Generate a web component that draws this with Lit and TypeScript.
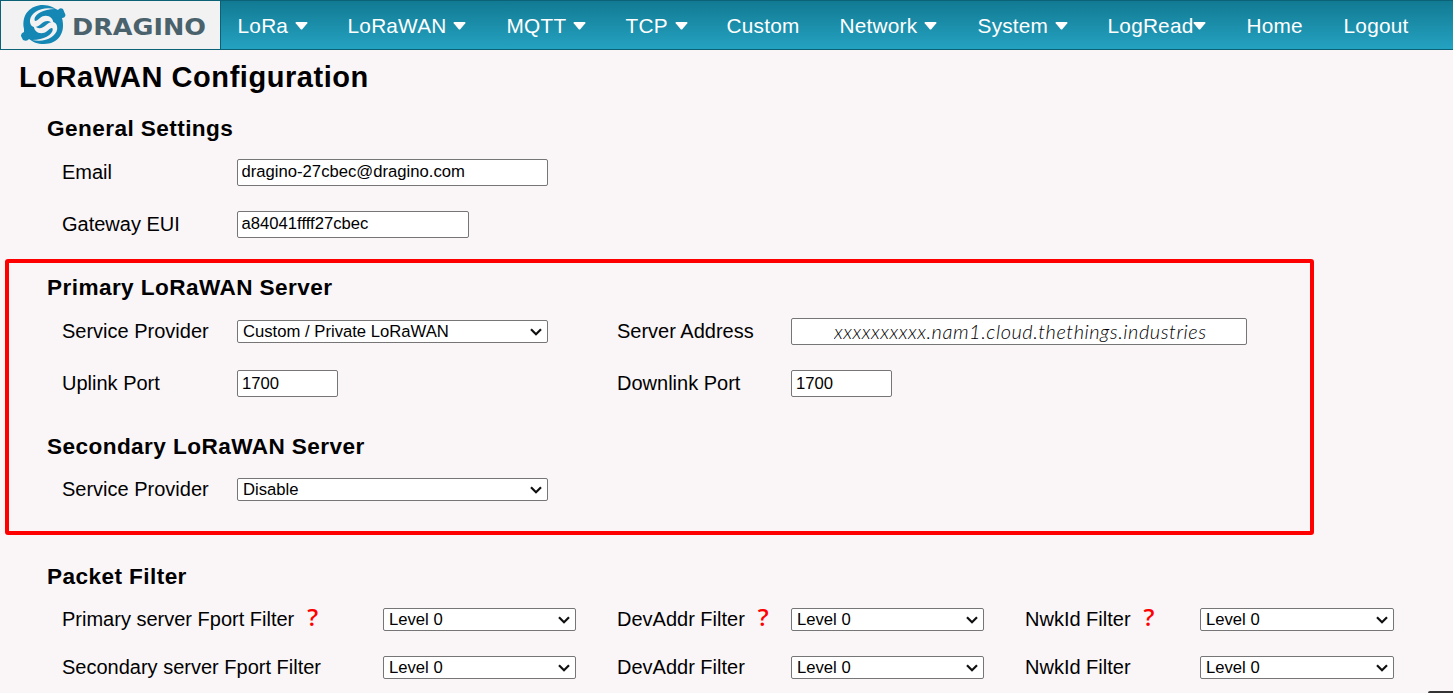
import { LitElement, html, css, nothing } from "lit";
import { customElement, property } from "lit/decorators.js";

const caret = html`<svg class="caret" width="13" height="8" viewBox="0 0 13 8"><path d="M1.2 0H11.8Q13 .2 12.3 1.2L7.3 7.2Q6.5 8 5.7 7.2L.7 1.2Q0 .2 1.2 0Z" fill="#fff"/></svg>`;

@customElement("select-box")
class SelectBox extends LitElement {
  @property() value = "";
  static styles = css`
    :host { display: flex; align-items: center; box-sizing: border-box; height: 23px; border: 1px solid #767676; border-radius: 2px; background: #fff; padding: 0 5px; font: 16.67px/21px "Liberation Sans", Arial, sans-serif; color: #000; justify-content: space-between; }
    svg { display: block; margin-top: 1px; }
  `;
  render() {
    return html`<span>${this.value}</span><svg width="12" height="8" viewBox="0 0 12 8"><path d="M1 1.2L6 6.2L11 1.2" fill="none" stroke="#101010" stroke-width="2.2"/></svg>`;
  }
}

@customElement("app-root")
class AppRoot extends LitElement {
  static styles = css`
    :host { display: block; height: 693px; overflow: hidden; position: relative; background: #faf6f8; color: #000; font: 20px/24px "Liberation Sans", Arial, sans-serif; }
    .nav { box-sizing: border-box; height: 50px; border: 1px solid #0b6176; border-right: 0; display: grid; grid-template-columns: 220px 110px 159px 119px 101px 113px 138px 130px 139px 97px 1fr; background: linear-gradient(#127a93, #24a2c1); }
    .brand { background: #f2f2f2; border-right: 1px solid #0b6176; }
    .brand svg { display: block; }
    .wordmark { font: bold 23.3px "DejaVu Sans", sans-serif; fill: #4a626b; }
    .item { display: flex; align-items: center; padding-left: 16.6px; color: #fff; font-size: 20.8px; letter-spacing: .2px; height: 48px; box-sizing: border-box; padding-top: 2px; white-space: pre; }
    .caret { margin-left: 7px; margin-top: 0; }
    .tight .caret { margin-left: 0; }
    h1 { margin: 10px 0 0 19px; font-size: 29px; line-height: 34px; letter-spacing: .55px; }
    h2 { margin: 0 0 0 47px; font-size: 22.6px; line-height: 28px; letter-spacing: .42px; }
    .row { display: grid; grid-template-columns: 175px 380px 174px 1fr; padding-left: 62px; align-items: center; }
    .row.filter { grid-template-columns: 321px 234px 174px 234px 175px 1fr; }
    input { box-sizing: border-box; height: 27px; margin: 2px 0 0; padding: 0 3.5px 1px; border: 1px solid #767676; border-radius: 2px; background: #fff; font: 16.67px "Liberation Sans", Arial, sans-serif; color: #000; outline: none; }
    .prov select-box { margin-top: 2px; }
    .w311 { width: 311px; } .w232 { width: 232px; } .w193 { width: 193px; } .w194 { width: 194px; }
    .w101 { width: 101px; padding: 0 4px; }
    .addr { width: 456px; padding: 0 0 2px 42px; font: italic 300 20px Lato, sans-serif; letter-spacing: .53px; }
    .q { color: #f00; font: 600 24px/0 "Open Sans", sans-serif; margin-left: 13px; }
    .general { margin-top: 21px; }
    .mail { margin-top: 14px; } .eui { margin-top: 23px; }
    .primary { margin-top: 36px; } .prov { margin-top: 14px; } .ports { margin-top: 23px; }
    .secondary { margin-top: 36px; } .prov2 { margin-top: 16px; }
    .packet { margin-top: 62px; } .f1 { margin-top: 16px; } .f2 { margin-top: 24px; }
    .frame { position: absolute; left: 5px; top: 259px; width: 1309px; height: 276px; box-sizing: border-box; border: 4px solid #f00; border-radius: 3px; pointer-events: none; }
    .corner { position: absolute; right: 0; bottom: 0; width: 25px; height: 2px; background: #333; border-top-left-radius: 3px; }
  `;
  item(label: string, arrow: boolean, tight = false) {
    return html`<div class="item ${tight ? "tight" : ""}">${label}${arrow ? caret : nothing}</div>`;
  }
  render() {
    return html`
      <nav class="nav">
        <div class="brand"><svg width="219" height="48" viewBox="1 1 219 48">
          <path fill="#1487b5" d="M24 29C21 14 31 5 43 5C50 5 54 8 58 10Q60 7 63 9L65.500 15Q65 18 62 18C66 33 58 44 44 44C37 44 33 42 29 39Q27 42 23 40L21 36Q21 33 24 32Z"/>
          <g fill="#f2f2f2">
            <path d="M55 9C42 6 31 12 30 20C29.500 28 36 29 41 24C45 20 50 19.500 53.500 24.500C54 16 45 13.500 40 18C36 21.500 34.500 22 34.500 19C35 14 43 9.500 55 9Z"/>
            <path d="M32.200 40C45 43 56 37 57.200 29C57.700 21 51 20 46.200 25C42 29 37 29.500 33.700 24.500C33.200 33 42 35.500 47.200 31C51 27.500 52.700 27 52.700 30C52 35 44 39.500 32.200 40Z"/>
          </g>
          <text class="wordmark" x="72" y="35" textLength="134" lengthAdjust="spacingAndGlyphs">DRAGINO</text>
        </svg></div>
        ${this.item("LoRa", true)}${this.item("LoRaWAN", true)}${this.item("MQTT", true)}${this.item("TCP", true)}${this.item("Custom", false)}${this.item("Network", true)}${this.item("System", true)}${this.item("LogRead", true, true)}${this.item("Home", false)}${this.item("Logout", false)}
      </nav>
      <h1>LoRaWAN Configuration</h1>
      <h2 class="general">General Settings</h2>
      <div class="row mail"><label>Email</label><input class="w311" .value=${"dragino-27cbec@dragino.com"}></div>
      <div class="row eui"><label>Gateway EUI</label><input class="w232" .value=${"a84041ffff27cbec"}></div>
      <h2 class="primary">Primary LoRaWAN Server</h2>
      <div class="row prov"><label>Service Provider</label><select-box class="w311" value="Custom / Private LoRaWAN"></select-box><label>Server Address</label><input class="addr" .value=${"xxxxxxxxxx.nam1.cloud.thethings.industries"}></div>
      <div class="row ports"><label>Uplink Port</label><input class="w101" .value=${"1700"}><label>Downlink Port</label><input class="w101" .value=${"1700"}></div>
      <h2 class="secondary">Secondary LoRaWAN Server</h2>
      <div class="row prov2"><label>Service Provider</label><select-box class="w311" value="Disable"></select-box></div>
      <h2 class="packet">Packet Filter</h2>
      ${[0, 1].map((i) => html`<div class="row filter ${i ? "f2" : "f1"}">
        ${[i ? "Secondary server Fport Filter" : "Primary server Fport Filter", "DevAddr Filter", "NwkId Filter"].map((t, n) => html`<label>${t}${i ? nothing : html`<span class="q">?</span>`}</label><select-box class=${n === 2 ? "w194" : "w193"} value="Level 0"></select-box>`)}
      </div>`)}
      <div class="frame"></div>
      <div class="corner"></div>`;
  }
}
